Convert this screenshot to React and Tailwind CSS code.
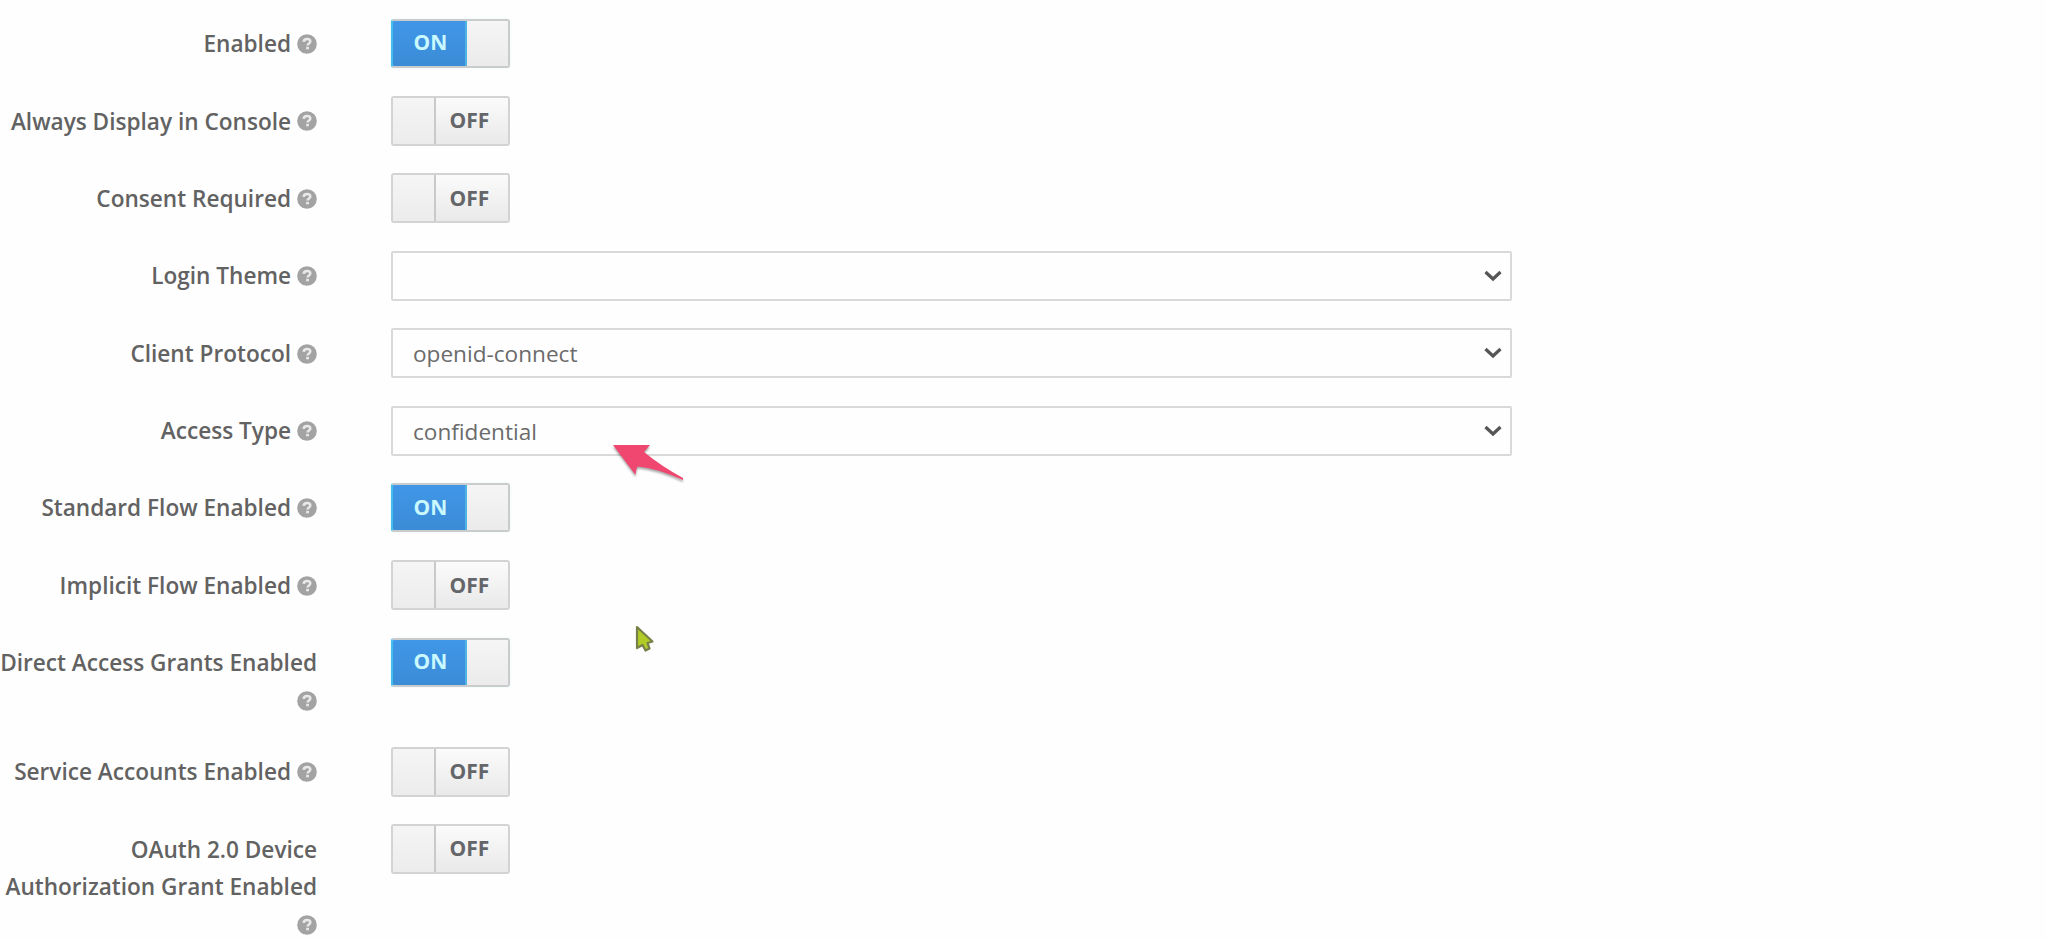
const rows = [
  { lines: ['Enabled'], inlineHelp: true, on: true },
  { lines: ['Always Display in Console'], inlineHelp: true, on: false },
  { lines: ['Consent Required'], inlineHelp: true, on: false },
  { lines: ['Login Theme'], inlineHelp: true, select: true, value: '' },
  { lines: ['Client Protocol'], inlineHelp: true, select: true, value: 'openid-connect' },
  { lines: ['Access Type'], inlineHelp: true, select: true, value: 'confidential' },
  { lines: ['Standard Flow Enabled'], inlineHelp: true, on: true },
  { lines: ['Implicit Flow Enabled'], inlineHelp: true, on: false },
  { lines: ['Direct Access Grants Enabled'], inlineHelp: false, on: true, tall: true },
  { lines: ['Service Accounts Enabled'], inlineHelp: true, on: false },
  { lines: ['OAuth 2.0 Device', 'Authorization Grant Enabled'], inlineHelp: false, on: false },
]

function Help() {
  return (
    <svg viewBox="0 0 20 20" className="h-5 w-5 shrink-0" aria-hidden="true">
      <circle cx="10" cy="10" r="9.8" fill="#a3a3a3" />
      <path d="M6.700 7.900C6.800 5.800 8.300 4.900 10.100 4.900c1.900 0 3.200 1 3.200 2.500 0 2-2.700 2-2.700 4" fill="none" stroke="#e9e9e9" strokeWidth="2.500" />
      <rect x="9.2" y="12.8" width="2.7" height="2.5" fill="#e9e9e9" />
    </svg>
  )
}

function Switch({ on }) {
  if (on) {
    return (
      <div className="flex h-[49px] w-[119px] overflow-hidden rounded-[3px] border-2 border-[#cbcbcb] border-l-[#43bdec] bg-[#f1f1f1] shadow-[0_0_2px_#d8f6ff]">
        <div className="-my-0.5 flex w-[74px] items-center justify-center border-y-2 border-r-2 border-t-[#45c4f2] border-r-[#4fb4e4] border-b-[#3a9fd0] bg-linear-to-b from-[#4096e8] to-[#3b8cd6] pl-[3px] text-[21px] font-bold text-[#c9f8ff]">
          ON
        </div>
        <div className="flex-1 bg-linear-to-b from-[#f5f5f5] to-[#ebebeb]" />
      </div>
    )
  }
  return (
    <div className="flex h-[50px] w-[119px] overflow-hidden rounded-[3px] border-2 border-[#d3d3d3]">
      <div className="w-[43px] border-r-2 border-[#c9c9c9] bg-linear-to-b from-[#f5f5f5] to-[#ececec]" />
      <div className="flex flex-1 items-center justify-center bg-linear-to-b from-[#fbfbfb] to-[#e9e9e9] pr-[5px] text-[21px] font-bold text-[#64666a]">
        OFF
      </div>
    </div>
  )
}

function Select({ value }) {
  return (
    <div className="flex h-[50px] w-[1121px] items-center justify-between rounded-[2px] border-2 border-[#d9d9d9] bg-[#fefefe] pr-2 pl-5 text-[22.6px] text-[#6b6b6b]">
      <span className="relative top-px">{value}</span>
      <svg viewBox="0 0 18 12" className="h-3 w-[18px]" aria-hidden="true">
        <path d="M1.5 2 9 9 16.5 2" fill="none" stroke="#565656" strokeWidth="3.2" />
      </svg>
    </div>
  )
}

export default function App() {
  return (
    <main className="relative h-[940px] w-[2046px] overflow-hidden bg-[#fefefe] pt-[18.7px] font-['Open_Sans',sans-serif]">
      {rows.map((row) => (
        <div key={row.lines[0]} className={row.tall ? 'flex h-[109.1px]' : 'flex h-[77.38px]'}>
          <div className="flex w-[317px] shrink-0 flex-col items-end pt-[6.5px] text-[22.6px] leading-[37.7px] font-semibold whitespace-nowrap text-[#626262]">
            {row.lines.map((line) => (
              <div key={line} className="flex items-center gap-1.5">
                <span>{line}</span>
                {row.inlineHelp && <Help />}
              </div>
            ))}
            {!row.inlineHelp && (
              <div className="flex h-[37.7px] shrink-0 items-center">
                <Help />
              </div>
            )}
          </div>
          <div className="ml-[74px]">{row.select ? <Select value={row.value} /> : <Switch on={row.on} />}</div>
        </div>
      ))}

      <svg viewBox="0 0 76 44" className="absolute top-[442px] left-[610px] h-[44px] w-[76px] overflow-visible drop-shadow-[0_2px_1px_rgba(0,0,0,0.35)]" aria-hidden="true">
        <path d="M3 3H40L34 10Q51 24 73 36V38Q46 26 28 24.500Q26 26 25.500 33Z" fill="#ef476f" />
      </svg>
      <svg viewBox="0 0 20 28" className="absolute top-[625px] left-[635px] h-7 w-5" aria-hidden="true">
        <path d="M2 2 17.500 16.500 12.500 18 14.500 23.500 10.500 25.500 7.500 20 2 23Z" fill="#b2cb26" stroke="#76804a" strokeWidth="2.2" strokeLinejoin="round" />
      </svg>
    </main>
  )
}
